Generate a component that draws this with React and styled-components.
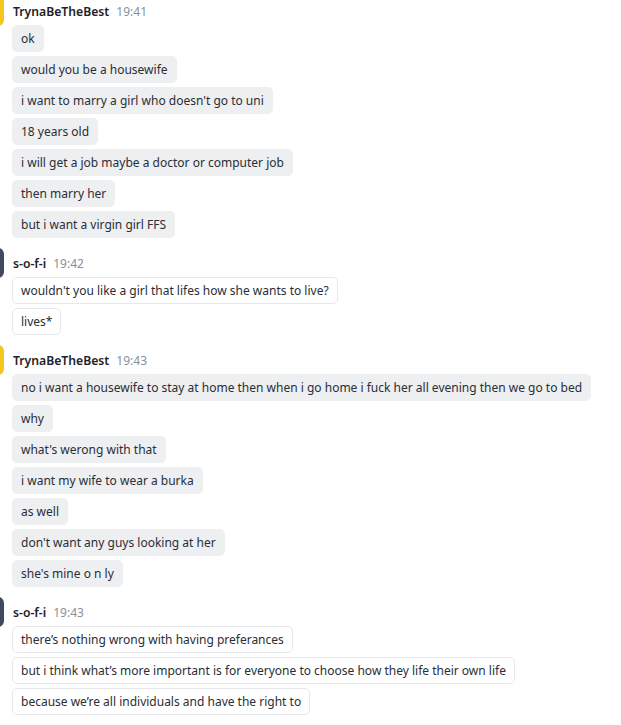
import React from "react";
import styled, { createGlobalStyle } from "styled-components";

const groups = [
  {
    name: "TrynaBeTheBest",
    time: "19:41",
    avatar: "#f6c51e",
    own: false,
    lines: [
      "ok",
      "would you be a housewife",
      "i want to marry a girl who doesn't go to uni",
      "18 years old",
      "i will get a job maybe a doctor or computer job",
      "then marry her",
      "but i want a virgin girl FFS",
    ],
  },
  {
    name: "s-o-f-i",
    time: "19:42",
    avatar: "#3f4a5e",
    own: true,
    lines: ["wouldn't you like a girl that lifes how she wants to live?", "lives*"],
  },
  {
    name: "TrynaBeTheBest",
    time: "19:43",
    avatar: "#f6c51e",
    own: false,
    lines: [
      "no i want a housewife to stay at home then when i go home i fuck her all evening then we go to bed",
      "why",
      "what's werong with that",
      "i want my wife to wear a burka",
      "as well",
      "don't want any guys looking at her",
      "she's mine o n ly",
    ],
  },
  {
    name: "s-o-f-i",
    time: "19:43",
    avatar: "#3f4a5e",
    own: true,
    lines: [
      "there\u2019s nothing wrong with having preferances",
      "but i think what\u2019s more important is for everyone to choose how they life their own life",
      "because we\u2019re all individuals and have the right to",
    ],
  },
];

export default function App() {
  return (
    <>
      <GlobalStyle />
      <Chat>
        {groups.map((g, i) => (
          <Group key={i}>
            <Avatar $color={g.avatar} />
            <Header>
              <Name>{g.name}</Name>
              <Time>{g.time}</Time>
            </Header>
            <Bubbles>
              {g.lines.map((line, j) => (
                <Bubble key={j} $own={g.own}>
                  {line}
                </Bubble>
              ))}
            </Bubbles>
          </Group>
        ))}
      </Chat>
    </>
  );
}

const GlobalStyle = createGlobalStyle`
  body {
    margin: 0;
    background: #ffffff;
    font-family: "Noto Sans", "Open Sans", sans-serif;
  }
`;

const Chat = styled.div`
  display: flex;
  flex-direction: column;
  gap: 17px;
  padding: 3px 0 0 12px;
  width: 621px;
  height: 725px;
  box-sizing: border-box;
  overflow: hidden;
`;

const Group = styled.div`
  position: relative;
  display: flex;
  flex-direction: column;
  gap: 4px;
`;

const Avatar = styled.div`
  position: absolute;
  left: -52px;
  top: -7px;
  width: 44px;
  height: 30px;
  border-radius: 6px;
  background: ${(p) => p.$color};
`;

const Header = styled.div`
  display: flex;
  align-items: baseline;
  gap: 7px;
  height: 18px;
  padding-left: 1px;
`;

const Name = styled.span`
  font-size: 12.2px;
  font-weight: 600;
  color: #1e2228;
`;

const Time = styled.span`
  font-size: 12px;
  color: #8a8f97;
`;

const Bubbles = styled.div`
  display: flex;
  flex-direction: column;
  align-items: flex-start;
  gap: 4px;
`;

const Bubble = styled.div`
  box-sizing: border-box;
  height: 27px;
  padding: 0 8px;
  display: flex;
  align-items: center;
  font-size: 12px;
  color: #2a2e35;
  border-radius: 5px;
  white-space: nowrap;
  background: ${(p) => (p.$own ? "#ffffff" : "#eeeff1")};
  border: 1px solid ${(p) => (p.$own ? "#e7e9ec" : "#eeeff1")};
`;
